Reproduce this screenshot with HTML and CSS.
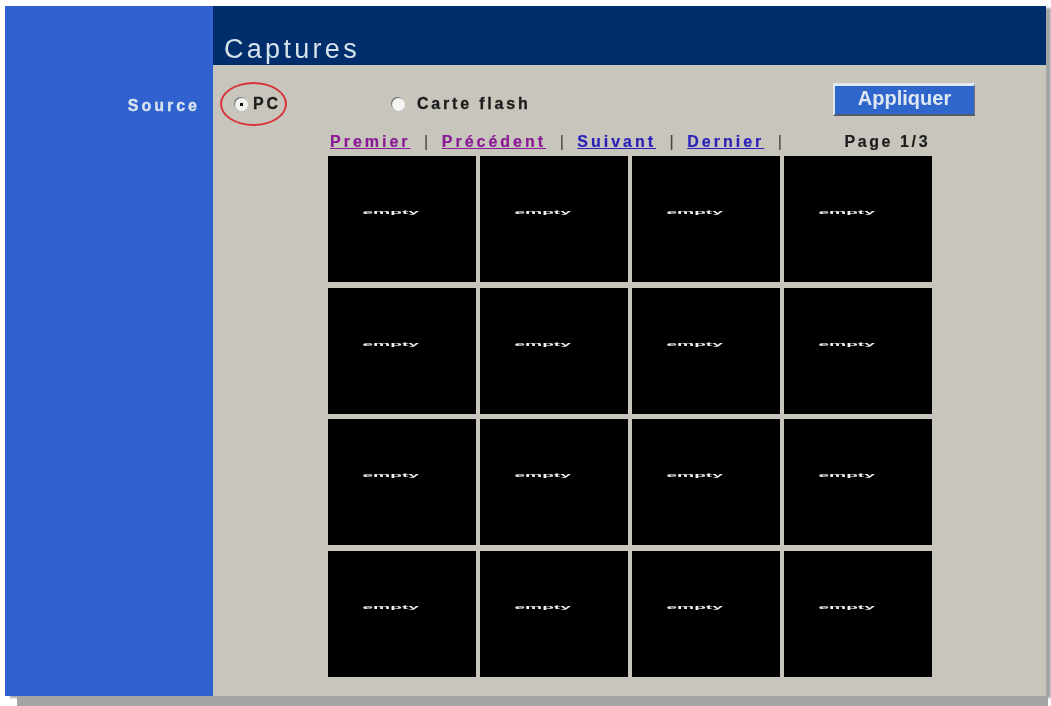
FILE: index.html
```html
<!DOCTYPE html>
<html lang="fr">
<head>
    <meta charset="UTF-8">
    <meta name="viewport" content="width=device-width, initial-scale=1.0">
    <title>Captures</title>
    <link rel="stylesheet" href="styles.css">
</head>
<body>
    <div class="window">
        <div class="sidebar">
            <span class="side-label">Source</span>
        </div>
        <div class="main">
            <div class="header">
                <h1>Captures</h1>
            </div>
            <div class="source-row">
                <label class="radio radio-pc">
                    <input type="radio" name="source" checked>
                    <span>PC</span>
                    <span class="highlight"></span>
                </label>
                <label class="radio radio-flash">
                    <input type="radio" name="source">
                    <span>Carte flash</span>
                </label>
                <button class="apply-button">Appliquer</button>
            </div>
            <div class="content">
                <div class="pager">
                    <a href="#" class="visited">Premier</a>
                    <span class="sep">|</span>
                    <a href="#" class="visited">Précédent</a>
                    <span class="sep">|</span>
                    <a href="#">Suivant</a>
                    <span class="sep">|</span>
                    <a href="#">Dernier</a>
                    <span class="sep">|</span>
                    <span class="page-num">Page 1/3</span>
                </div>
                <div class="thumbs">
                    <div class="thumb"><span>empty</span></div>
                    <div class="thumb"><span>empty</span></div>
                    <div class="thumb"><span>empty</span></div>
                    <div class="thumb"><span>empty</span></div>
                    <div class="thumb"><span>empty</span></div>
                    <div class="thumb"><span>empty</span></div>
                    <div class="thumb"><span>empty</span></div>
                    <div class="thumb"><span>empty</span></div>
                    <div class="thumb"><span>empty</span></div>
                    <div class="thumb"><span>empty</span></div>
                    <div class="thumb"><span>empty</span></div>
                    <div class="thumb"><span>empty</span></div>
                    <div class="thumb"><span>empty</span></div>
                    <div class="thumb"><span>empty</span></div>
                    <div class="thumb"><span>empty</span></div>
                    <div class="thumb"><span>empty</span></div>
                </div>
            </div>
        </div>
    </div>
</body>
</html>
```

FILE: styles.css
```css
html {
    overflow: hidden;
}

body {
    font-family: "Liberation Sans", Arial, sans-serif;
    margin: 0;
    height: 100vh;
    padding: 6px 5px 0 5px;
    box-sizing: border-box;
    background-color: #fff;
}

.window {
    display: flex;
    height: 690px;
    box-shadow: 5px 2px 2px #a5a5a5, 7px 17px 0 -5px #a5a5a5;
    filter: blur(0.6px);
}

.sidebar {
    width: 208px;
    flex-shrink: 0;
    background-color: #2f62cf;
    text-align: right;
    padding: 91px 13px 0 0;
    box-sizing: border-box;
}

.side-label {
    color: #d9e4ee;
    font-size: 16px;
    font-weight: bold;
    letter-spacing: 3px;
    -webkit-text-stroke: 0.3px;
}

.main {
    flex: 1;
    background-color: #c8c5bd;
}

.header {
    height: 59px;
    background-color: #002d6b;
    box-sizing: border-box;
    padding: 29px 0 0 11px;
}

h1 {
    margin: 0;
    color: #d5e2ea;
    font-size: 27px;
    line-height: 28px;
    font-weight: normal;
    letter-spacing: 3.3px;
}

.source-row {
    display: flex;
    align-items: center;
    height: 66px;
    padding: 12px 71px 0 22px;
    box-sizing: border-box;
}

.radio {
    display: flex;
    align-items: center;
    font-size: 16px;
    font-weight: bold;
    letter-spacing: 2.8px;
    color: #1c1c1c;
    -webkit-text-stroke: 0.3px;
}

.radio input {
    appearance: none;
    width: 13px;
    height: 13px;
    margin: 0 5px 0 0;
    border-radius: 50%;
    background-color: #f4f4f2;
    box-shadow: -1px -1px 0 #77757a;
}

.radio input:checked {
    background-image: radial-gradient(circle, #111 1.5px, transparent 2px);
}

.radio-flash input {
    margin-right: 12px;
}

.radio-pc {
    position: relative;
    width: 157px;
    flex-shrink: 0;
}

.highlight {
    position: absolute;
    left: -15px;
    top: -13px;
    width: 67px;
    height: 44px;
    border: 2px solid #d8343a;
    border-radius: 50%;
    box-sizing: border-box;
}

.apply-button {
    margin-left: auto;
    margin-bottom: 9px;
    width: 142px;
    height: 33px;
    padding: 0 0 3px;
    background-color: #2f66cc;
    color: #dfe8f2;
    font-family: inherit;
    font-size: 20px;
    font-weight: bold;
    border: none;
    border-top: 3px solid #dfe9f2;
    border-left: 2px solid #dfe9f2;
    border-right: 1px solid #6f6f78;
    border-bottom: 2px solid #555a68;
    box-sizing: border-box;
}

.content {
    margin-left: 115px;
}

.pager {
    display: flex;
    align-items: center;
    height: 25px;
    padding: 0 0 4px 2px;
    box-sizing: border-box;
    font-size: 16px;
    font-weight: bold;
    letter-spacing: 3px;
    -webkit-text-stroke: 0.2px;
}

.pager a {
    color: #2a22b8;
}

.pager a.visited {
    color: #8a1a96;
}

.sep {
    color: #4a4845;
    font-weight: normal;
    letter-spacing: 0;
    margin: 0 13.5px;
}

.page-num {
    color: #1c1c1c;
    margin-left: 49px;
    letter-spacing: 2.6px;
}

.thumbs {
    display: grid;
    grid-template-columns: repeat(4, 148px);
    grid-auto-rows: 126px;
    column-gap: 4px;
    row-gap: 5.6px;
}

.thumb {
    background-color: #000;
    color: #eee;
    display: flex;
    align-items: center;
    justify-content: center;
    padding: 0 22px 14px 0;
    box-sizing: border-box;
}

.thumb span {
    font-size: 12px;
    font-weight: bold;
    transform: scale(1.6, 0.5);
}
```
